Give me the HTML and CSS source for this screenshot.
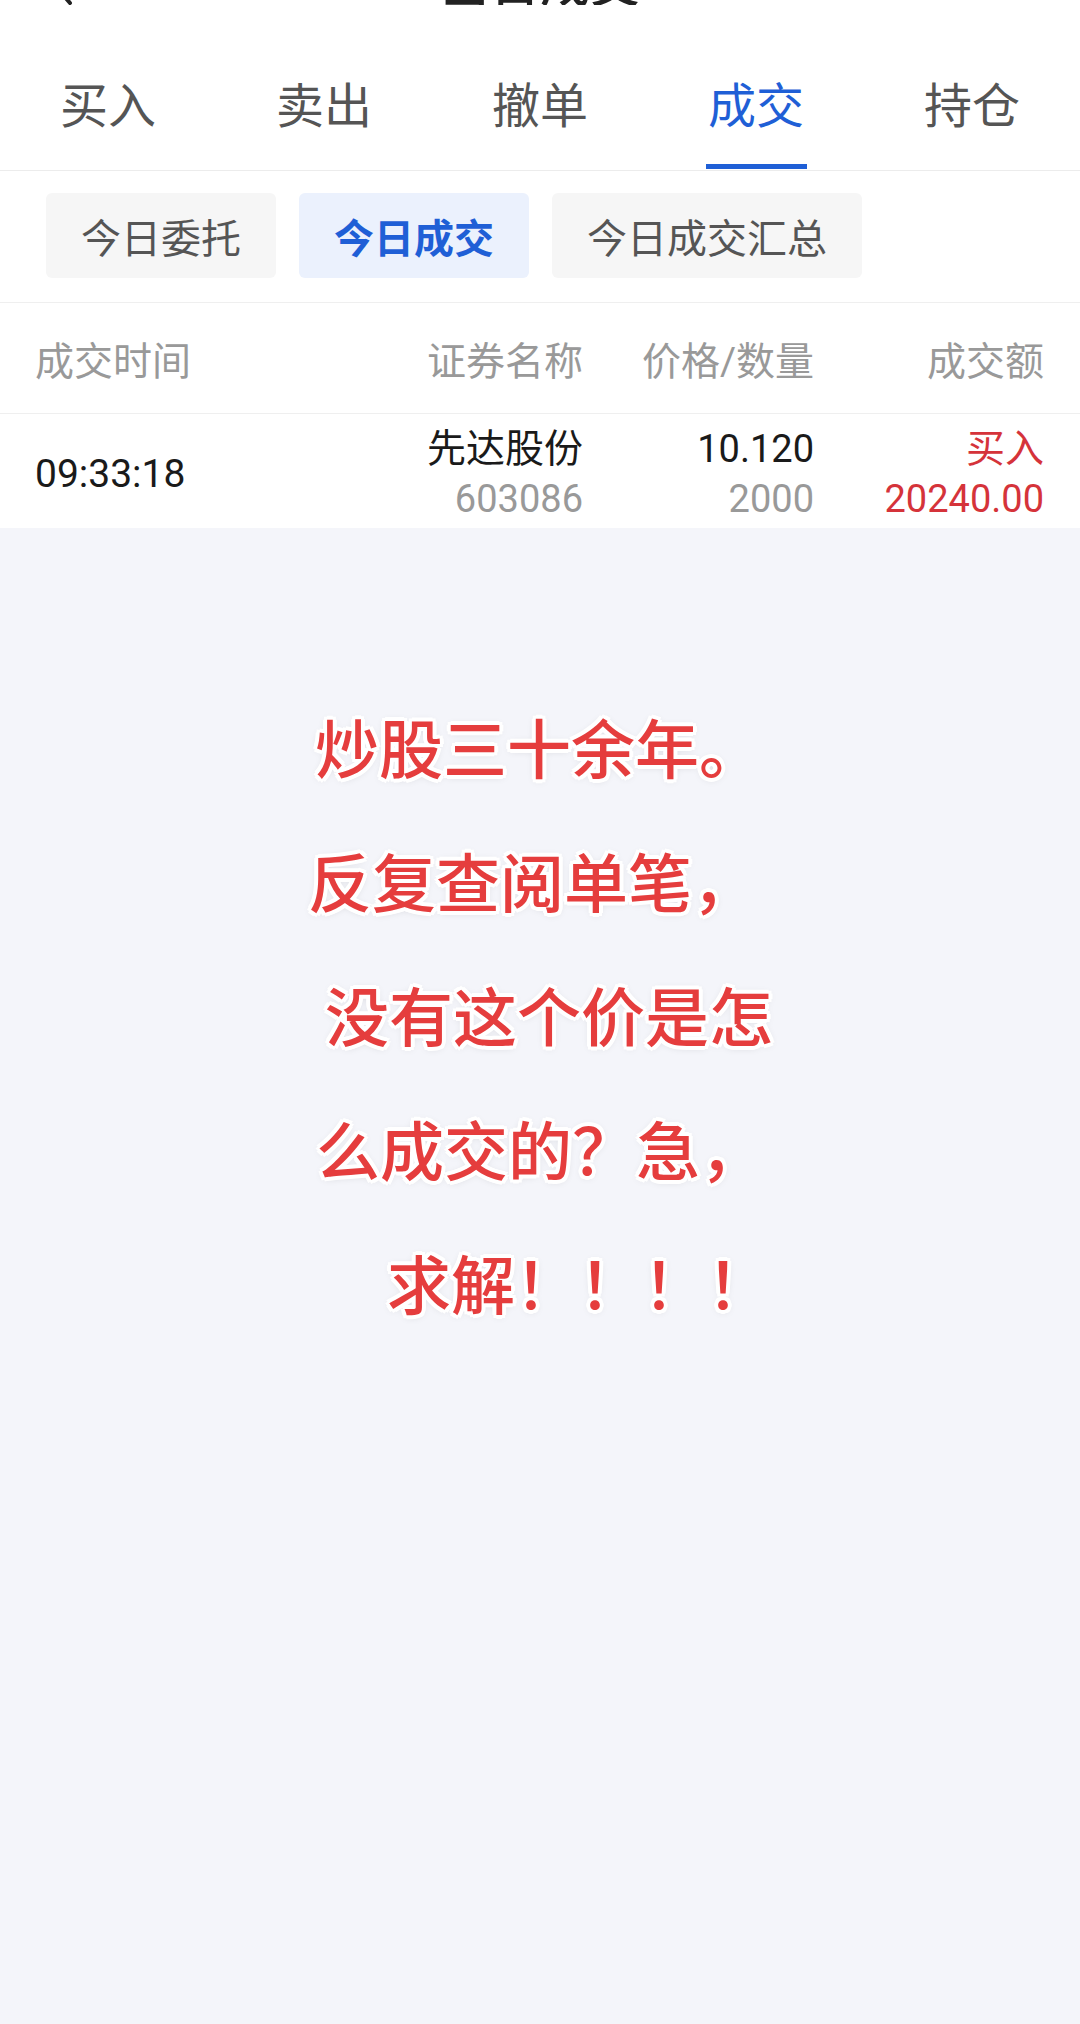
FILE: index.html
```html
<!DOCTYPE html>
<html lang="zh-CN">
<head>
    <meta charset="UTF-8">
    <meta name="viewport" content="width=device-width, initial-scale=1.0">
    <title>当日成交</title>
    <link rel="stylesheet" href="styles.css">
</head>
<body>

    <!-- Title bar, scrolled mostly out of view -->
    <div class="top-bar">
        <svg class="back-icon" width="30" height="50" viewBox="0 0 30 50">
            <path d="M24 4 L6 25 L24 46" fill="none" stroke="#222" stroke-width="4" stroke-linecap="round"/>
        </svg>
        <span class="page-title">当日成交</span>
    </div>

    <!-- Main tabs -->
    <div class="tabs">
        <div class="tab">买入</div>
        <div class="tab">卖出</div>
        <div class="tab">撤单</div>
        <div class="tab active">成交</div>
        <div class="tab">持仓</div>
    </div>

    <!-- Sub filters -->
    <div class="chips">
        <div class="chip">今日委托</div>
        <div class="chip active">今日成交</div>
        <div class="chip">今日成交汇总</div>
    </div>

    <div class="table-head">
        <div class="col-time">成交时间</div>
        <div class="col-right">证券名称</div>
        <div class="col-right">价格/数量</div>
        <div class="col-right">成交额</div>
    </div>

    <div id="deal-list"></div>

    <!-- Caption written over the screenshot -->
    <div class="caption">
        <div class="caption-line line-1">炒股三十余年。</div>
        <div class="caption-line line-2">反复查阅单笔，</div>
        <div class="caption-line line-3">没有这个价是怎</div>
        <div class="caption-line line-4">么成交的？急，</div>
        <div class="caption-line line-5">求解！！！！</div>
    </div>

    <script>
        // Today's deals
        const deals = [
            { time: '09:33:18', name: '先达股份', code: '603086', price: '10.120', qty: '2000', side: '买入', amount: '20240.00' }
        ];

        const dealList = document.getElementById('deal-list');

        deals.forEach(deal => {
            const row = document.createElement('div');
            row.classList.add('deal-row');

            row.innerHTML = `
                <div class="col-time time">${deal.time}</div>
                <div class="col-right">
                    <div class="main name">${deal.name}</div>
                    <div class="sub">${deal.code}</div>
                </div>
                <div class="col-right">
                    <div class="main">${deal.price}</div>
                    <div class="sub">${deal.qty}</div>
                </div>
                <div class="col-right red">
                    <div class="main name">${deal.side}</div>
                    <div class="sub">${deal.amount}</div>
                </div>
            `;

            dealList.appendChild(row);
        });
    </script>

</body>
</html>
```

FILE: styles.css
```css
html, body {
    margin: 0;
    padding: 0;
    background-color: #f4f5fa;
    font-family: Roboto, "Noto Sans CJK SC", sans-serif;
}

body {
    width: 1080px;
    min-height: 2024px;
}

.top-bar {
    height: 5px;
    overflow: hidden;
    background-color: #fff;
    display: flex;
    align-items: flex-end;
    justify-content: center;
    position: relative;
}

.back-icon {
    position: absolute;
    left: 46px;
    bottom: -2px;
}

.page-title {
    font-size: 50px;
    line-height: 1;
    margin-bottom: -5px;
    color: #222;
    font-weight: 500;
}

.tabs {
    display: flex;
    background-color: #fff;
    padding-top: 39px;
    border-bottom: 1px solid #ececec;
}

.tab {
    flex: 1;
    display: flex;
    flex-direction: column;
    align-items: center;
    font-size: 48px;
    line-height: 60px;
    padding-top: 33px;
    padding-bottom: 1px;
    color: #555;
}

.tab::after {
    content: '';
    width: 101px;
    height: 5px;
    margin-top: 27px;
    background-color: transparent;
}

.tab.active {
    color: #1f5fd6;
}

.tab.active::after {
    background-color: #1f5fd6;
}

.chips {
    display: flex;
    gap: 23px;
    padding: 22px 46px 24px;
    background-color: #fff;
    border-bottom: 1px solid #efefef;
}

.chip {
    height: 85px;
    padding: 0 35px;
    display: flex;
    align-items: center;
    font-size: 40px;
    color: #555;
    background-color: #f6f6f6;
    border-radius: 6px;
}

.chip.active {
    background-color: #ebf1fd;
    color: #1f5fd6;
    font-weight: 700;
}

.table-head,
.deal-row {
    display: grid;
    grid-template-columns: 1fr 250px 231px 230px;
    padding: 0 36px 0 35px;
    background-color: #fff;
}

.table-head {
    height: 110px;
    align-items: center;
    font-size: 39px;
    color: #999;
    border-bottom: 1px solid #efefef;
}

.col-right {
    text-align: right;
}

.deal-row {
    padding-top: 10px;
    padding-bottom: 4px;
    font-size: 38px;
    color: #1a1a1a;
}

.deal-row .main,
.deal-row .sub {
    line-height: 50px;
}

.deal-row .name {
    font-size: 39px;
}

.deal-row .sub {
    color: #999;
}

.deal-row .time {
    align-self: center;
    font-size: 39px;
}

.deal-row .red .main,
.deal-row .red .sub {
    color: #d5333a;
}

.caption {
    padding: 150px 0 0 308px;
    font-family: "Noto Sans CJK SC", sans-serif;
    font-size: 64px;
    font-weight: 500;
    line-height: 134px;
    color: #e53d3d;
    text-shadow:
        4px 0 0 #fff, -4px 0 0 #fff, 0 4px 0 #fff, 0 -4px 0 #fff,
        3px 3px 0 #fff, -3px 3px 0 #fff, 3px -3px 0 #fff, -3px -3px 0 #fff,
        0 1px 8px rgba(0, 0, 0, 0.18);
}

.line-1 { margin-left: 7px; }
.line-2 { margin-left: 0; }
.line-3 { margin-left: 17px; }
.line-4 { margin-left: 8px; }
.line-5 { margin-left: 79px; }
```
